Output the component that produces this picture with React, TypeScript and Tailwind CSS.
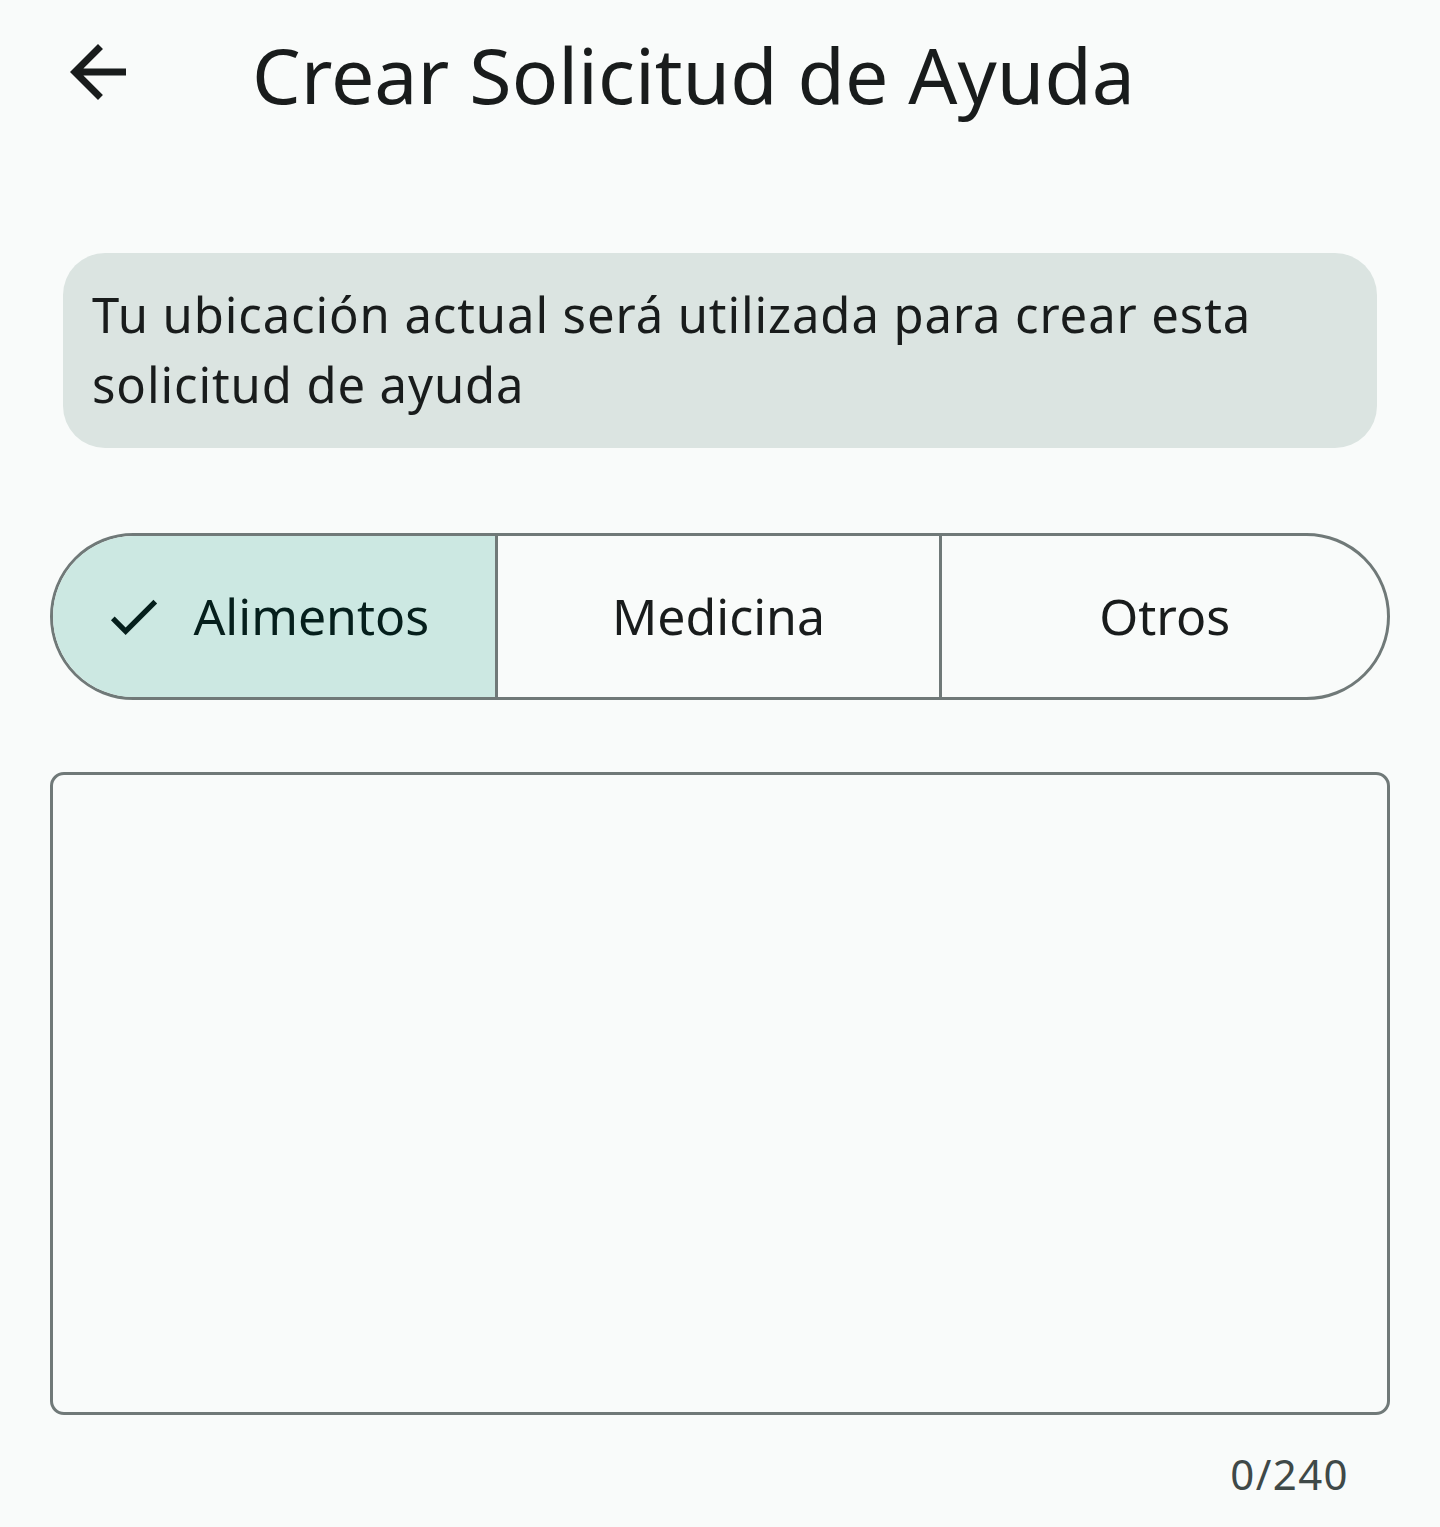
import React, { useState } from 'react';

const BackIcon = () => (
    <svg width="84" height="84" viewBox="0 0 24 24" fill="#191c1c">
        <path d="M20 11H7.83l5.59-5.59L12 4l-8 8 8 8 1.41-1.41L7.83 13H20v-2z" />
    </svg>
);

const CheckIcon = () => (
    <svg width="63" height="63" viewBox="0 0 24 24" fill="#051f1c">
        <path d="M9 16.17L4.83 12l-1.42 1.41L9 19 21 7l-1.41-1.41z" />
    </svg>
);

const categories = ['Alimentos', 'Medicina', 'Otros'];

export default function App() {
    const [selected, setSelected] = useState('Alimentos');
    const [text, setText] = useState('');

    return (
        <div className="min-h-[1527px] w-[1440px] bg-[#f9fbfa] text-[#191c1c]" style={{ fontFamily: '"Noto Sans", "Open Sans", sans-serif' }}>
            {/* top bar */}
            <div className="h-[150px] flex items-center">
                <button className="ml-[56px] w-[84px] h-[84px] flex items-center justify-center -mt-[6px]">
                    <BackIcon />
                </button>
                <h1 className="ml-[112px] text-[77px] leading-none -mt-[2px]">Crear Solicitud de Ayuda</h1>
            </div>

            <div className="px-[63px] pt-[103px]">
                <div className="bg-[#dbe4e1] rounded-[42px] pl-[29px] pr-[40px] pt-[26px] pb-[29px] text-[49px] leading-[70px] tracking-[0.9px] text-[#191c1c]">
                    Tu ubicación actual será utilizada para crear esta solicitud de ayuda
                </div>
            </div>

            <div className="px-[50px] pt-[85px]">
                <div className="grid grid-cols-3 h-[167px] rounded-full border-[3.5px] border-[#707978] overflow-hidden">
                    {categories.map((c, i) => {
                        const active = c === selected;
                        return (
                            <button
                                key={c}
                                onClick={() => setSelected(c)}
                                className={`flex items-center justify-center gap-[28px] text-[50px] ${i < categories.length - 1 ? 'border-r-[3.5px] border-[#707978]' : ''} ${active ? 'bg-[#cce8e2] text-[#051f1c] pr-[16px]' : 'text-[#191c1c]'}`}
                            >
                                {active && <CheckIcon />}
                                <span className="leading-none pb-[2px]">{c}</span>
                            </button>
                        );
                    })}
                </div>
            </div>

            <div className="px-[50px] pt-[72px]">
                <textarea
                    value={text}
                    onChange={(e) => setText(e.target.value.slice(0, 240))}
                    className="block w-full h-[643px] rounded-[14px] border-[3.5px] border-[#707978] bg-transparent resize-none outline-none p-[56px] text-[56px]"
                />
                <div className="flex justify-end pr-[41px] pt-[38px] text-[42px] leading-none tracking-[1.4px] text-[#3f4948]">
                    {text.length}/240
                </div>
            </div>
        </div>
    );
}
